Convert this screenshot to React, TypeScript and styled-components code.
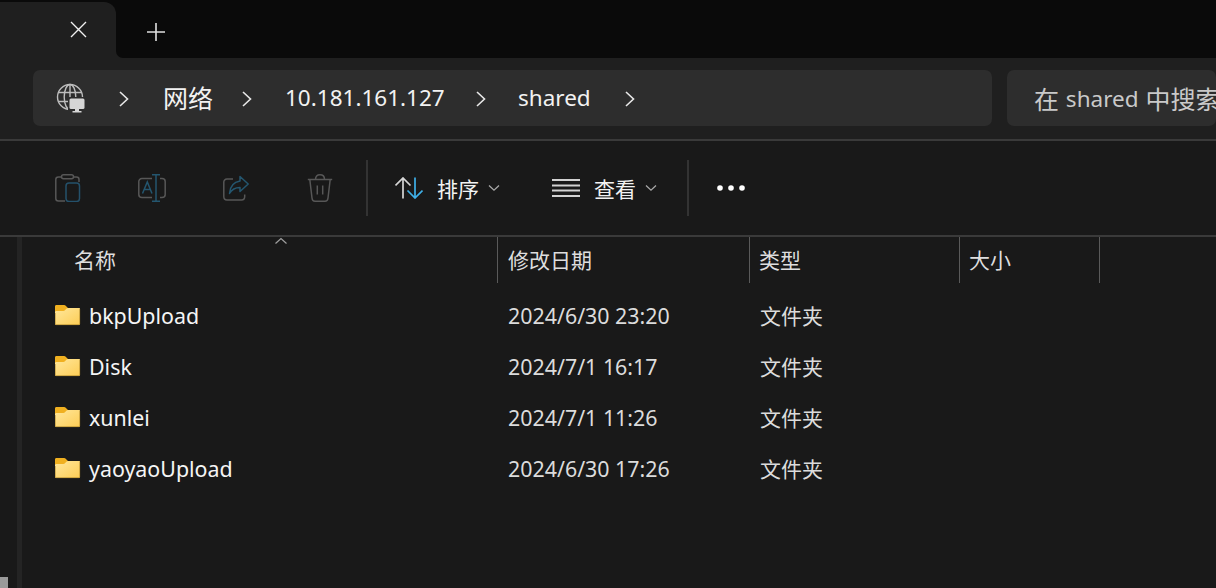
import React from "react";
import styled, { createGlobalStyle } from "styled-components";

const GlobalStyle = createGlobalStyle`
  html, body {
    margin: 0;
    height: 100%;
    background: #191919;
    overflow: hidden;
  }
  #root {
    height: 100%;
  }
  * {
    box-sizing: border-box;
  }
`;

const FONT = `"Noto Sans", "Noto Sans CJK SC", sans-serif`;

const Window = styled.div`
  width: 1216px;
  height: 588px;
  display: flex;
  flex-direction: column;
  font-family: ${FONT};
  color: #fff;
  background: #191919;
  overflow: hidden;
`;

const TitleBar = styled.div`
  height: 58px;
  flex: none;
  display: flex;
  background: #1f1f1f;
`;

const TabSlot = styled.div`
  width: 116px;
  flex: none;
  padding-top: 2px;
  background: #0a0a0a;
`;

const Tab = styled.div`
  height: 100%;
  padding: 18px 0 0 69px;
  background: #1f1f1f;
  border-radius: 0 12px 0 0;
`;

const TabStrip = styled.div`
  flex: 1;
  padding: 22px 0 0 30px;
  background: #0a0a0a;
  border-radius: 0 0 0 7px;
`;

const NavBar = styled.div`
  height: 83px;
  flex: none;
  display: flex;
  gap: 15px;
  padding: 12px 0 0 33px;
  background: #1f1f1f;
  border-bottom: 2px solid #3a3a3a;
`;

const Field = styled.div`
  height: 56px;
  display: flex;
  align-items: center;
  background: #2d2d2d;
  border-radius: 7px;
`;

const AddressField = styled(Field)`
  width: 959px;
  flex: none;
  padding-left: 23px;
`;

const SearchField = styled(Field)`
  flex: 1;
  min-width: 0;
  padding-left: 27px;
  overflow: hidden;
  white-space: nowrap;
  font-size: 25px;
  color: #c9c9c9;
`;

const Latin = styled.span`
  font-size: 22.5px;
  margin: 0 1px;
`;

const Crumb = styled.span<{ $width: number; $size: number }>`
  width: ${(p) => p.$width}px;
  flex: none;
  font-size: ${(p) => p.$size}px;
  line-height: 56px;
  color: #f2f2f2;
  white-space: nowrap;
`;

const CrumbIcon = styled.span<{ $width: number }>`
  width: ${(p) => p.$width}px;
  flex: none;
  display: flex;
  align-items: center;
`;

const Toolbar = styled.div`
  height: 96px;
  flex: none;
  display: flex;
  align-items: center;
  padding-left: 55px;
  background: #191919;
  border-bottom: 2px solid #3a3a3a;
`;

const ToolIcon = styled.span<{ $width: number }>`
  width: ${(p) => p.$width}px;
  flex: none;
  display: flex;
  align-items: center;
`;

const ToolSep = styled.span<{ $gap: number }>`
  width: 2px;
  height: 56px;
  flex: none;
  margin-right: ${(p) => p.$gap}px;
  background: #333333;
`;

const ToolLabel = styled.span<{ $width: number }>`
  width: ${(p) => p.$width}px;
  flex: none;
  display: flex;
  align-items: center;
  gap: 9px;
  font-size: 21px;
  color: #f2f2f2;
`;

const Content = styled.div`
  flex: 1;
  display: flex;
  min-height: 0;
`;

const LeftGutter = styled.div`
  width: 22px;
  flex: none;
  display: flex;
  flex-direction: column;
  justify-content: flex-end;
  border-right: 5px solid #242424;
`;

const ScrollThumb = styled.div`
  width: 8px;
  height: 11px;
  background: #9a9a9a;
`;

const List = styled.div`
  flex: 1;
  min-width: 0;
`;

const HeaderRow = styled.div`
  height: 46px;
  display: grid;
  grid-template-columns: 476px 252px 210px 140px;
`;

const HeaderCell = styled.div<{ $indent: number }>`
  position: relative;
  display: flex;
  align-items: center;
  padding: 0 0 3px ${(p) => p.$indent}px;
  border-right: 1px solid #5a5a5a;
  font-size: 21px;
  color: #dedede;
`;

const SortCaret = styled.svg`
  position: absolute;
  top: 0;
  left: 252px;
`;

const Rows = styled.div`
  padding-top: 7px;
`;

const Row = styled.div`
  height: 51px;
  display: grid;
  grid-template-columns: 476px 252px 210px;
  align-items: center;
  font-size: 21.4px;
`;

const NameCell = styled.div`
  display: flex;
  align-items: center;
  gap: 8px;
  padding-left: 33px;
  color: #f5f5f5;
  white-space: nowrap;
`;

const InfoCell = styled.div`
  padding-left: 10px;
  color: #dcdcdc;
  white-space: nowrap;
`;

const TypeCell = styled(InfoCell)`
  padding-bottom: 2px;
  font-size: 21px;
`;

const FolderGlyph = styled.svg`
  margin-bottom: 2px;
`;

const FolderIcon = () => (
  <FolderGlyph width="26" height="22" viewBox="0 0 26 22">
    <defs>
      <linearGradient id="folderFill" x1="0" y1="0" x2="1" y2="1">
        <stop offset="0" stopColor="#ffe79c" />
        <stop offset="1" stopColor="#fdcd55" />
      </linearGradient>
    </defs>
    <path d="M0 2.500C0 1.500.6 1 1.500 1H9C9.800 1 10.500 1.500 11.200 2.200L13 4H24V10H0Z" fill="#f0b020" />
    <path d="M0 8.500C0 7.500.6 7 1.500 7H8.500C10.500 7 10.800 4 13 4H24C24.600 4 25 4.400 25 5V20C25 20.600 24.600 21 24 21H1C.4 21 0 20.600 0 20Z" fill="url(#folderFill)" />
    <path d="M.3 9V20C.3 20.400.6 20.700 1 20.700H24C24.400 20.700 24.700 20.400 24.700 20V5" fill="none" stroke="#a57c22" strokeWidth=".6" />
  </FolderGlyph>
);

const Chevron = () => (
  <svg width="12" height="18" viewBox="0 0 12 18" fill="none" stroke="#e8e8e8" strokeWidth="1.6">
    <path d="M2 3 9.500 10 2 17" />
  </svg>
);

const SmallCaret = () => (
  <svg width="12" height="8" viewBox="0 0 12 8" fill="none" stroke="#a8a8a8" strokeWidth="1.3">
    <path d="M1 1.500 6 6.200 11 1.500" />
  </svg>
);

const GlobeIcon = () => (
  <svg width="30" height="30" viewBox="0 0 30 30" fill="none">
    <g stroke="#bdbdbd" strokeWidth="1.4">
      <circle cx="14" cy="14" r="12.500" />
      <ellipse cx="14" cy="14" rx="5.800" ry="12.500" />
      <path d="M14 1.500V26.500M2.500 9.500H25.500M2.500 18.500H25.500" />
    </g>
    <rect x="12" y="14" width="18" height="16" fill="#2d2d2d" />
    <rect x="13.500" y="15.500" width="15" height="10.500" rx="1.500" fill="#d6d6d6" />
    <path d="M19 26H23V28H25.500V29.500H16.500V28H19Z" fill="#d6d6d6" />
  </svg>
);

const PasteIcon = () => (
  <svg width="26" height="28" viewBox="0 0 26 28" fill="none" strokeWidth="1.500">
    <path d="M6 3H3.500C1.800 3 .8 4 .8 5.500V24.500C.8 26 1.800 27 3.500 27H10M19 3H21.500C23 3 24 4 24 5.500V8" stroke="#575757" />
    <rect x="6.500" y=".8" width="12" height="4" rx="2" stroke="#575757" />
    <rect x="11" y="9" width="13.500" height="18.500" rx="3" stroke="#24516b" />
  </svg>
);

const RenameIcon = () => (
  <svg width="28" height="28" viewBox="0 0 28 28" fill="none" strokeWidth="1.500">
    <path d="M14 4.500H4C2 4.500 .8 6 .8 7.500V20.500C.8 22 2 23.500 4 23.500H14M22 4.500H24C26 4.500 27.200 6 27.200 7.500V20.500C27.200 22 26 23.500 24 23.500H22" stroke="#575757" />
    <path d="M14 .8H22M18 .8V27.200M14 27.200H22" stroke="#24566f" />
    <path d="M4.500 19.500 9.300 8 14 19.500M6.200 15.500H12.500" stroke="#24566f" />
  </svg>
);

const ShareIcon = () => (
  <svg width="26" height="26" viewBox="0 0 26 26" fill="none" strokeWidth="1.500">
    <path d="M10 4H4C2 4 .8 5.500 .8 7V21.500C.8 23.500 2 25 4 25H18.500C20.500 25 21.700 23.500 21.700 21.500V19.500" stroke="#575757" />
    <path d="M17 1.500 25.200 9 17 16.500V12.500C12.500 12.500 9 14 6.500 18.500 7 12 10.500 7 17 6Z" stroke="#24566f" strokeLinejoin="round" />
  </svg>
);

const TrashIcon = () => (
  <svg width="26" height="28" viewBox="0 0 26 28" fill="none" stroke="#575757" strokeWidth="1.500">
    <path d="M.8 5.500H25.200M2.800 5.500 5 24C5.200 26.200 6.300 27.200 8 27.200H18C19.700 27.200 20.800 26.200 21 24L23.200 5.500M8.500 5.500C8.500 2.500 10 .8 13 .8S17.500 2.500 17.500 5.500M10.300 11.500V20.500M15.700 11.500V20.500" />
  </svg>
);

const SortIcon = () => (
  <svg width="28" height="22" viewBox="0 0 28 22" fill="none" strokeWidth="1.700">
    <path d="M8 21.500V1M.5 8.500 8 1 15.500 8.500" stroke="#d6d6d6" />
    <path d="M20 .5V21M12.500 13.500 20 21 27.500 13.500" stroke="#3fb0e8" />
  </svg>
);

const ViewIcon = () => (
  <svg width="28" height="20" viewBox="0 0 28 20" fill="none" stroke="#d2d2d2" strokeWidth="2">
    <path d="M0 2H28M0 7.500H28M0 12.500H28M0 18H28" />
  </svg>
);

const MoreIcon = () => (
  <svg width="30" height="8" viewBox="0 0 30 8" fill="#ffffff">
    <circle cx="4" cy="4" r="2.800" />
    <circle cx="15" cy="4" r="2.800" />
    <circle cx="26" cy="4" r="2.800" />
  </svg>
);

const folders = [
  { name: "bkpUpload", date: "2024/6/30 23:20" },
  { name: "Disk", date: "2024/7/1 16:17" },
  { name: "xunlei", date: "2024/7/1 11:26" },
  { name: "yaoyaoUpload", date: "2024/6/30 17:26" },
];

export default function App() {
  return (
    <Window>
      <GlobalStyle />
      <TitleBar>
        <TabSlot>
          <Tab>
            <svg width="18" height="18" viewBox="0 0 18 18" stroke="#f0f0f0" strokeWidth="1.400">
              <path d="M2 2 17 17M17 2 2 17" />
            </svg>
          </Tab>
        </TabSlot>
        <TabStrip>
          <svg width="20" height="20" viewBox="0 0 20 20" stroke="#e0e0e0" strokeWidth="1.600">
            <path d="M1 10H19M10 1V19" />
          </svg>
        </TabStrip>
      </TitleBar>
      <NavBar>
        <AddressField>
          <CrumbIcon $width={62}><GlobeIcon /></CrumbIcon>
          <CrumbIcon $width={45}><Chevron /></CrumbIcon>
          <Crumb $width={78} $size={25}>网络</Crumb>
          <CrumbIcon $width={44}><Chevron /></CrumbIcon>
          <Crumb $width={190} $size={22.5}>10.181.161.127</Crumb>
          <CrumbIcon $width={43}><Chevron /></CrumbIcon>
          <Crumb $width={106} $size={22.5}>shared</Crumb>
          <CrumbIcon $width={20}><Chevron /></CrumbIcon>
        </AddressField>
        <SearchField>
          <span>在</span>
          <Latin>&nbsp;shared&nbsp;</Latin>
          <span>中搜索</span>
        </SearchField>
      </NavBar>
      <Toolbar>
        <ToolIcon $width={83}><PasteIcon /></ToolIcon>
        <ToolIcon $width={85}><RenameIcon /></ToolIcon>
        <ToolIcon $width={84}><ShareIcon /></ToolIcon>
        <ToolIcon $width={59}><TrashIcon /></ToolIcon>
        <ToolSep $gap={27} />
        <ToolIcon $width={42}><SortIcon /></ToolIcon>
        <ToolLabel $width={115}>排序 <SmallCaret /></ToolLabel>
        <ToolIcon $width={42}><ViewIcon /></ToolIcon>
        <ToolLabel $width={93}>查看 <SmallCaret /></ToolLabel>
        <ToolSep $gap={27} />
        <MoreIcon />
      </Toolbar>
      <Content>
        <LeftGutter><ScrollThumb /></LeftGutter>
        <List>
          <HeaderRow>
            <HeaderCell $indent={52}>
              名称
              <SortCaret width="14" height="8" viewBox="0 0 14 8" fill="none" stroke="#a0a0a0" strokeWidth="1.200">
                <path d="M1.500 6.500 7 1.500 12.500 6.500" />
              </SortCaret>
            </HeaderCell>
            <HeaderCell $indent={10}>修改日期</HeaderCell>
            <HeaderCell $indent={9}>类型</HeaderCell>
            <HeaderCell $indent={9}>大小</HeaderCell>
          </HeaderRow>
          <Rows>
            {folders.map((f) => (
              <Row key={f.name}>
                <NameCell><FolderIcon />{f.name}</NameCell>
                <InfoCell>{f.date}</InfoCell>
                <TypeCell>文件夹</TypeCell>
              </Row>
            ))}
          </Rows>
        </List>
      </Content>
    </Window>
  );
}
